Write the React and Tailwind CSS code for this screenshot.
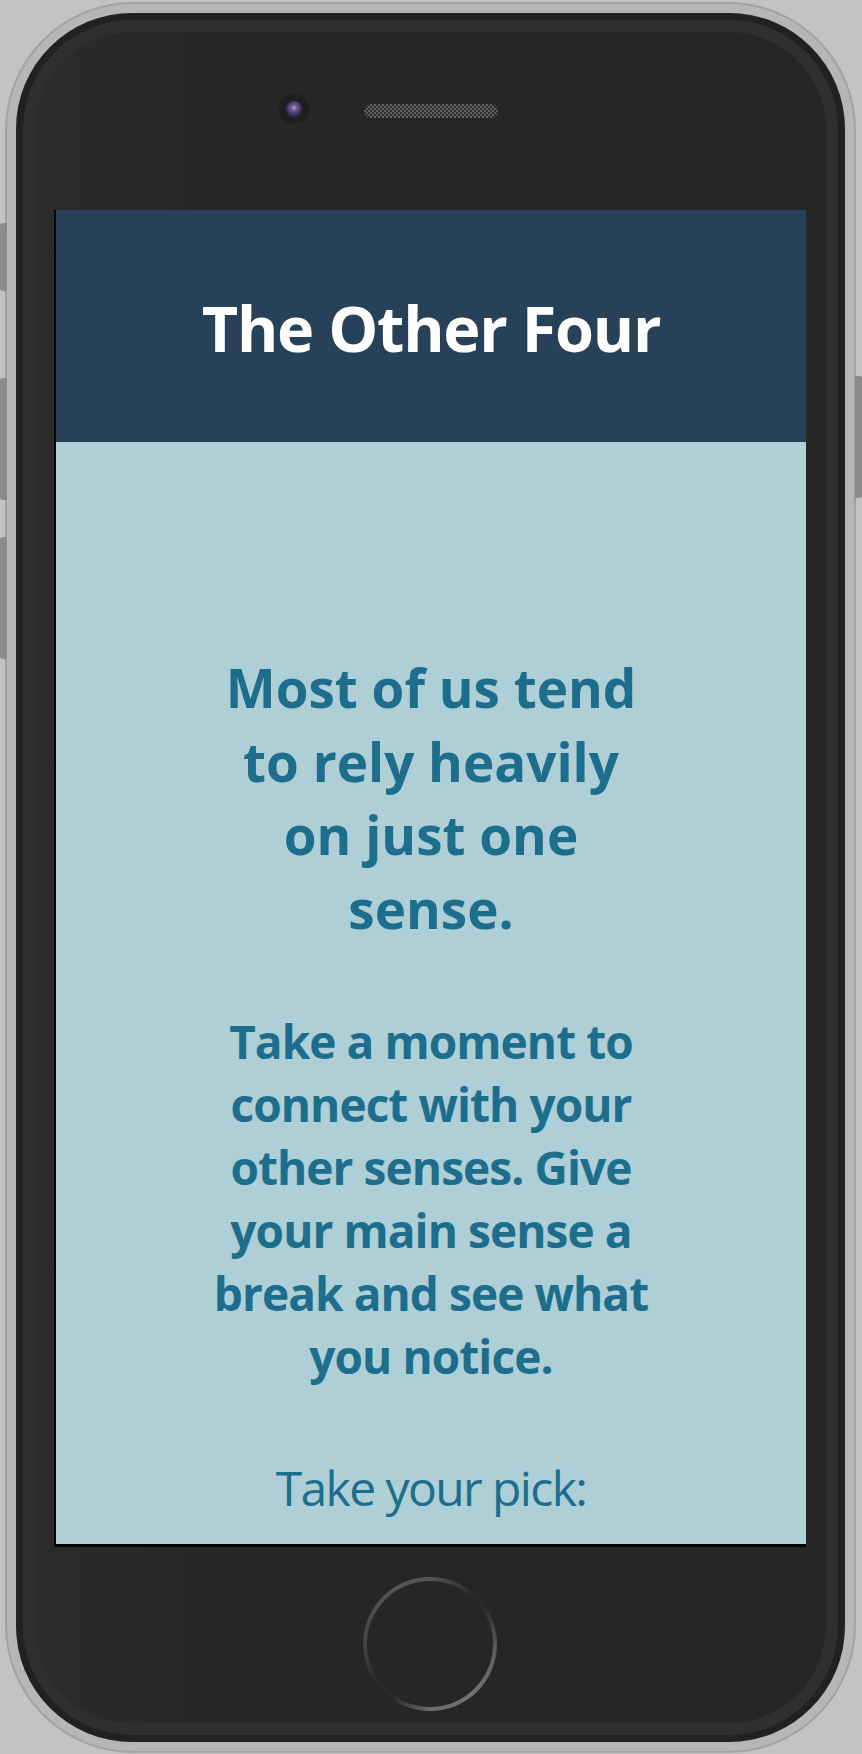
import React from "react";

export default function App() {
  return (
    <div className="relative w-[862px] h-[1754px] bg-[#c2c4c4] pt-[2px] pl-[5px] overflow-hidden font-['Open_Sans',sans-serif]">
      {/* side buttons */}
      <div className="absolute left-0 top-[223px] w-[7px] h-[68px] rounded-l-[3px] bg-[#8b8b8f]" />
      <div className="absolute left-0 top-[378px] w-[7px] h-[122px] rounded-l-[3px] bg-[#8b8b8f]" />
      <div className="absolute left-0 top-[537px] w-[7px] h-[122px] rounded-l-[3px] bg-[#8b8b8f]" />
      <div className="absolute right-0 top-[376px] w-[7px] h-[122px] rounded-r-[3px] bg-[#8b8b8f]" />

      {/* shell */}
      <div className="w-[851px] h-[1751px] rounded-[128px] border-2 border-[#a2a2a2] bg-[#b6b6b6] p-[9px]">
        <div className="w-full h-full rounded-[116px] bg-[#212121] p-[7px]">
          <div className="w-full h-full rounded-[109px] bg-[#2f2f2f] p-[12px]">
            <div className="w-full h-full rounded-[97px] bg-linear-to-r from-[#2b2b2b] via-[#262626] via-25% to-[#262626] flex flex-col">
              {/* camera + speaker */}
              <div className="flex items-center mt-[62px] ml-[244px]">
                <div className="w-[30px] h-[30px] rounded-full bg-[#1e1e1e] flex items-center justify-center">
                  <div className="w-[16px] h-[16px] rounded-full bg-[radial-gradient(circle_at_50%_42%,#b4abd2_0%,#6a5c98_22%,#3a3058_60%,#241d38_100%)]" />
                </div>
                <div className="ml-[55px] mt-[3px] w-[134px] h-[14px] rounded-full bg-[repeating-conic-gradient(#5f5f5f_0_25%,#2e2e2e_0_50%)] bg-[length:4px_4px]" />
              </div>

              {/* screen */}
              <div className="mt-[86px] ml-[19px] w-[752px] h-[1337px] border-l-2 border-b-[3px] border-black bg-[#afcfd7] flex flex-col overflow-hidden">
                <div className="h-[232px] bg-[#274258] flex items-center justify-center shrink-0">
                  <h1 className="text-white font-bold text-[63px] leading-none tracking-[-0.02em] mt-[2px]">
                    The Other Four
                  </h1>
                </div>
                <div className="flex flex-col items-center text-center text-[#1d6d8c]">
                  <p className="mt-[209px] font-bold text-[53px] leading-[73.5px] tracking-normal">
                    Most of us tend
                    <br />
                    to rely heavily
                    <br />
                    on just one
                    <br />
                    sense.
                  </p>
                  <p className="mt-[65px] font-bold text-[46px] leading-[63px] tracking-[-0.02em]">
                    Take a moment to
                    <br />
                    connect with your
                    <br />
                    other senses. Give
                    <br />
                    your main sense a
                    <br />
                    break and see what
                    <br />
                    you notice.
                  </p>
                  <p className="mt-[67px] font-normal text-[48px] leading-[65px] tracking-[-0.033em]">
                    Take your pick:
                  </p>
                </div>
              </div>

              {/* home button */}
              <div className="mt-[30px] ml-[328px] w-[134px] h-[134px] rounded-full p-[4px] bg-[conic-gradient(#555_0deg,#2a2a2a_40deg,#2a2a2a_55deg,#5c5c5c_95deg,#737373_140deg,#6a6a6a_180deg,#2a2a2a_215deg,#2a2a2a_235deg,#444_270deg,#565656_330deg,#555_360deg)]">
                <div className="w-full h-full rounded-full bg-[#262626]" />
              </div>
            </div>
          </div>
        </div>
      </div>
    </div>
  );
}
